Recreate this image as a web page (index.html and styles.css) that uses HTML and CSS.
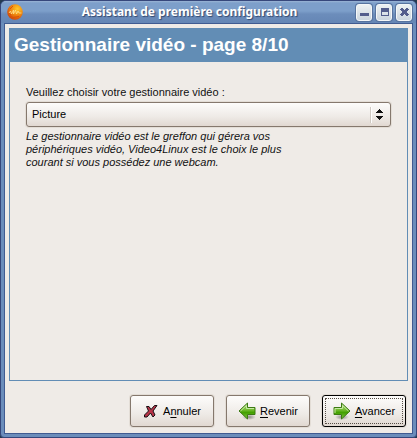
FILE: index.html
```html
<!DOCTYPE html>
<html lang="fr">
<head>
<meta charset="utf-8">
<title>Assistant de première configuration</title>
<link rel="stylesheet" href="styles.css">
</head>
<body>
<div class="window">
  <header class="titlebar">
    <svg class="app-icon" width="16" height="16" viewBox="0 0 16 16" aria-hidden="true">
      <defs><radialGradient id="sun" cx=".65" cy=".3" r=".75"><stop offset="0" stop-color="#ffc928"/><stop offset=".5" stop-color="#f08c10"/><stop offset="1" stop-color="#d04408"/></radialGradient></defs>
      <circle cx="8" cy="8" r="7.8" fill="url(#sun)"/>
      <path d="M2 9l1.500-2 1 3 2-4 0 4 2-4 1 4 1.500-3 1 2h2.500" fill="none" stroke="#ffe08a" stroke-width=".8"/>
      <path d="M3 12l3 1.500 6-1M3 5l3-3M2 9l2 2" fill="none" stroke="#d95208" stroke-width="1"/>
    </svg>
    <span class="caption">Assistant de première configuration</span>
    <div class="controls">
      <button class="control" type="button" aria-label="Réduire"><svg width="11" height="11" viewBox="0 0 11 11"><path d="M1 6h9v3H1z" fill="#535d8c"/></svg></button>
      <button class="control" type="button" aria-label="Agrandir"><svg width="11" height="11" viewBox="0 0 11 11"><path fill-rule="evenodd" d="M2 1h8v8H2zM3 5v3h6V5z" fill="#535d8c"/></svg></button>
      <button class="control" type="button" aria-label="Fermer"><svg width="11" height="11" viewBox="0 0 11 11"><path d="M2 1h2v1h1v1h1V2h1V1h2v1h1v1H9v1H8v2h1v1h1v1H9v1H7V8H6V7H5v1H4v1H2V8H1V7h1V6h1V4H2V3H1V2h1z" fill="#535d8c"/></svg></button>
    </div>
  </header>
  <main class="content">
    <section class="page">
      <h1 class="heading">Gestionnaire vidéo - page 8/10</h1>
      <div class="form">
        <label class="label" for="manager">Veuillez choisir votre gestionnaire vidéo :</label>
        <div class="combo">
          <select id="manager" class="select"><option>Picture</option></select>
          <svg class="arrows" width="13" height="16" viewBox="0 0 13 16" aria-hidden="true">
            <path d="M0 0h1v16H0z" fill="#cfc9c2"/><path d="M1 0h1v16H1z" fill="#fff"/>
            <path d="M9 2h1v1h1v1h1v1h1v1H6V5h1V4h1V3h1zM6 9h7v1h-1v1h-1v1h-1v1H9v-1H8v-1H7v-1H6z" fill="#111"/>
          </svg>
        </div>
        <p class="hint">Le gestionnaire vidéo est le greffon qui gérera vos périphériques vidéo, Video4Linux est le choix le plus courant si vous possédez une webcam.</p>
      </div>
    </section>
    <div class="actions">
      <button class="button" type="button">
        <svg width="16" height="16" viewBox="0 0 16 16" aria-hidden="true"><path d="M3.500 3.500h2.500l2 3 3.500-4h2.500l-4 5.500 2 4-2 2-2.500-4-3.500 4H1.500v-2l4-4z" fill="#b93448" stroke="#170f12" stroke-linejoin="round"/></svg>
        <span>A<u>n</u>nuler</span>
      </button>
      <button class="button" type="button">
        <svg width="18" height="18" viewBox="0 0 18 18" aria-hidden="true">
          <defs><linearGradient id="green" x1="0" y1="0" x2="0" y2="1"><stop offset="0" stop-color="#b2dc84"/><stop offset=".45" stop-color="#6fba2c"/><stop offset=".6" stop-color="#43a000"/><stop offset="1" stop-color="#81c744"/></linearGradient><radialGradient id="shade"><stop offset="0" stop-color="#000" stop-opacity=".4"/><stop offset="1" stop-color="#000" stop-opacity="0"/></radialGradient></defs>
          <ellipse cx="11" cy="15" rx="7" ry="3" fill="url(#shade)"/>
          <path d="M1 9l8.500-8v4.500H17v7H9.500V17z" fill="url(#green)" stroke="#3c7a13" stroke-linejoin="round"/>
          <path d="M2.500 9l6-5.600V6.500H16" fill="none" stroke="#c6e8a2"/>
        </svg>
        <span><u>R</u>evenir</span>
      </button>
      <button class="button default" type="button">
        <svg width="18" height="18" viewBox="0 0 18 18" aria-hidden="true">
          <ellipse cx="9" cy="15" rx="7" ry="3" fill="url(#shade)"/>
          <path d="M17 9L8.500 1v4.500H1v7h7.500V17z" fill="url(#green)" stroke="#3c7a13" stroke-linejoin="round"/>
          <path d="M15.500 9l-6-5.600V6.500H2V11" fill="none" stroke="#c6e8a2"/>
        </svg>
        <span><u>A</u>vancer</span>
      </button>
    </div>
  </main>
</div>
</body>
</html>
```
FILE: styles.css
```css
* { box-sizing: border-box; }

body {
  margin: 0;
  background: #243b50;
  color: #111;
  font: 11px/13px "Liberation Sans", Arial, sans-serif;
}

.window {
  display: flex;
  flex-direction: column;
  min-height: 100vh;
  padding: 0 3px 3px;
  border: 1px solid #36477b;
  border-radius: 6px 6px 4px 4px;
  background: #6b8dbb;
}

.titlebar {
  display: flex;
  align-items: center;
  height: 22px;
  margin: 0 -3px;
  padding: 0 4px 0 6px;
  border-radius: 5px 5px 0 0;
  background: linear-gradient(#9ab4d5 0, #7d9fca 2px, #7d9fca 10px, #6c8dbb 13px, #6586b5);
}

.caption {
  flex: 1;
  color: #fff;
  font: bold 12px/20px "Noto Sans", "Open Sans", sans-serif;
  text-align: center;
  text-shadow: 1px 1px 1px #35496f;
}

.controls {
  display: flex;
  gap: 4px;
}

.control {
  display: grid;
  place-items: center;
  width: 16px;
  height: 17px;
  padding: 0;
  border: 1px solid #f4f7f8;
  border-radius: 3px;
  background: linear-gradient(#edf1f2, #ccd6df);
  box-shadow: 0 0 0 1px #58749f;
}

.content {
  display: flex;
  flex: 1;
  flex-direction: column;
  padding: 4px 4px 6px;
  border: 1px solid #405b91;
  background: #efebe7;
}

.page {
  flex: 1;
  border: 1px solid #628db5;
}

.heading {
  margin: 0;
  padding: 3px 4px 5px;
  background: #628db5;
  color: #fff;
  font-size: 19px;
  line-height: 25px;
}

.form {
  padding: 24px 16px 8px;
}

.label {
  display: block;
  margin-bottom: 3px;
}

.combo {
  display: grid;
  align-items: center;
}

.select,
.arrows {
  grid-area: 1 / 1;
}

.select,
.button {
  border: 1px solid #85786d;
  border-radius: 3px;
  background: linear-gradient(#fdfcfb, #eeeae6 60%, #e1d8d1);
  box-shadow: 0 0 0 1px #e3ddd6;
  color: #000;
  font: inherit;
}

.select {
  width: 100%;
  height: 25px;
  padding: 0 5px;
  appearance: none;
}

.arrows {
  justify-self: end;
  margin-right: 8px;
  pointer-events: none;
}

.hint {
  max-width: 270px;
  margin: 3px 0 0;
  font-style: italic;
}

.actions {
  display: flex;
  justify-content: flex-end;
  gap: 12px;
  padding: 14px 2px 0 0;
}

.button {
  display: flex;
  align-items: center;
  justify-content: center;
  gap: 4px;
  width: 84px;
  height: 32px;
  padding: 0;
}

.button u {
  text-underline-offset: 2px;
}

.default {
  border-color: #000;
  outline: 1px dotted #554d46;
  outline-offset: -4px;
}
```
